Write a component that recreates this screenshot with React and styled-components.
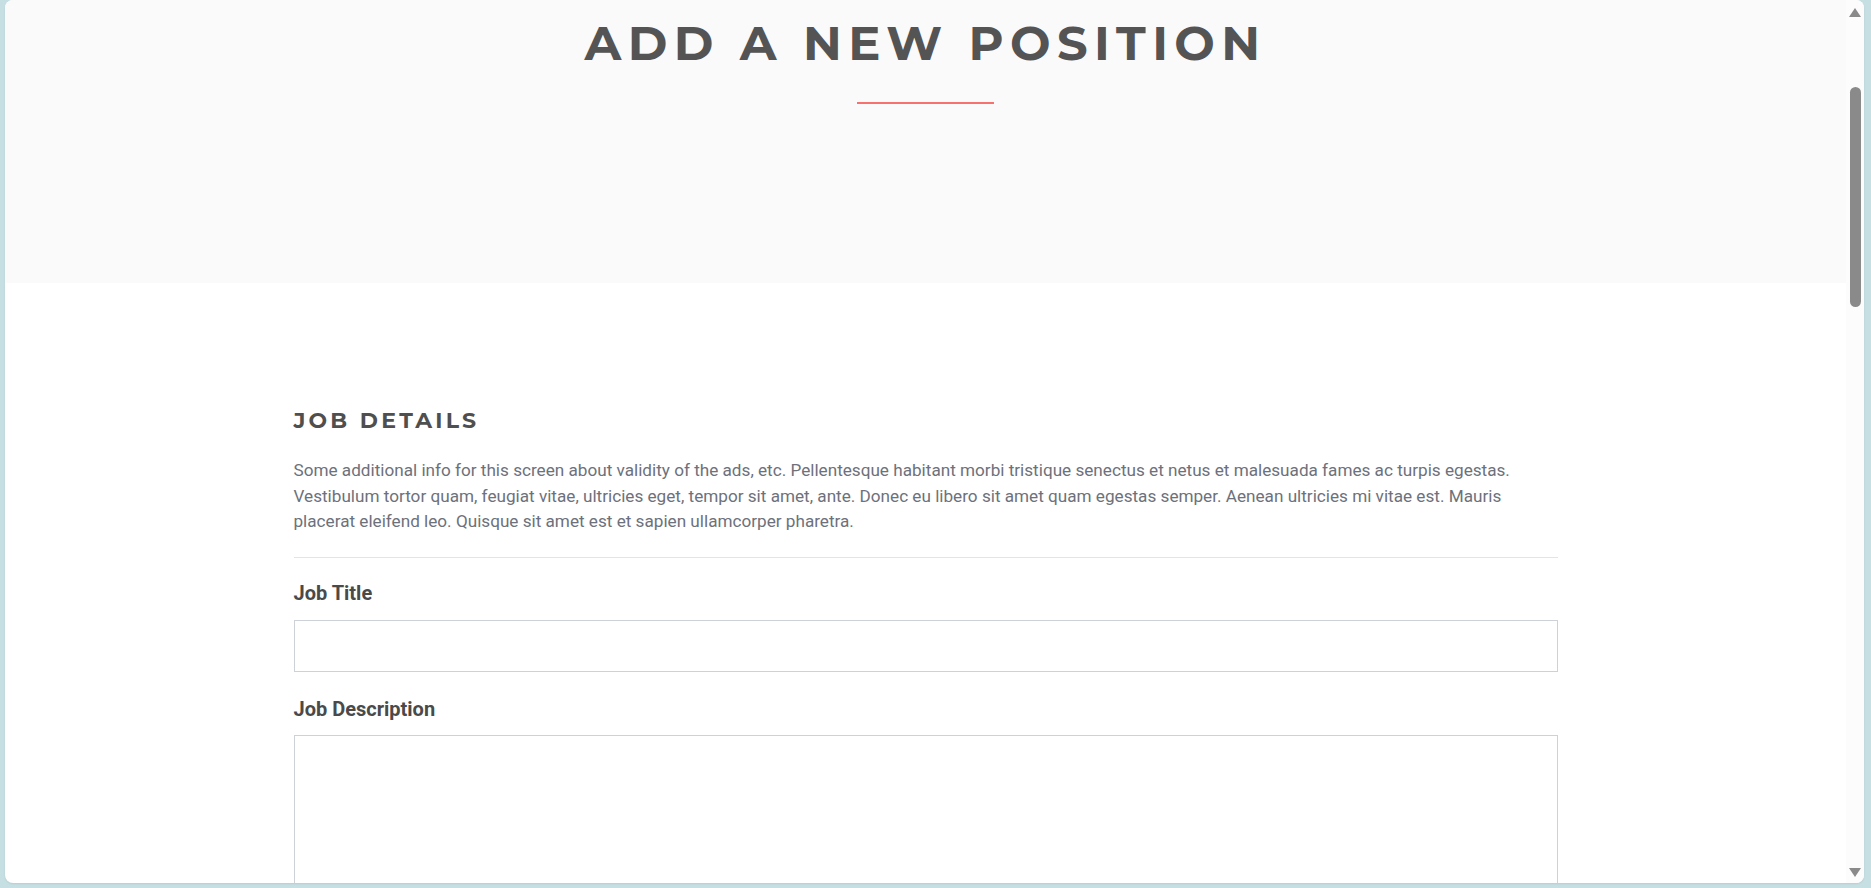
import React from 'react';
import styled, { createGlobalStyle } from 'styled-components';

const GlobalStyle = createGlobalStyle`
  html, body {
    margin: 0;
    padding: 0;
    height: 100%;
    background-color: #c6dfe3;
  }
  #root {
    height: 100%;
  }
  * {
    box-sizing: border-box;
  }
`;

const Frame = styled.div`
  height: 100vh;
  padding: 0 7px 5px 5px;
`;

const Window = styled.div`
  display: flex;
  height: 100%;
  background-color: #ffffff;
  border-radius: 8px;
  overflow: hidden;
  box-shadow: 0 1px 2px rgba(0, 0, 0, 0.08);
`;

const Viewport = styled.main`
  flex: 1;
  overflow: hidden;
  font-family: Roboto, "Liberation Sans", sans-serif;
`;

const Scrollbar = styled.div`
  width: 18px;
  display: flex;
  flex-direction: column;
  align-items: center;
  background-color: #fcfcfc;
  padding: 8px 0 6px;
`;

const Arrow = styled.div`
  width: 0;
  height: 0;
  border-left: 6px solid transparent;
  border-right: 6px solid transparent;
  ${({ down }) =>
    down
      ? 'border-top: 9px solid #8a8a8a; margin-top: auto;'
      : 'border-bottom: 9px solid #8a8a8a;'}
`;

const Thumb = styled.div`
  width: 11px;
  height: 220px;
  margin-top: 70px;
  border-radius: 6px;
  background-color: #8a8a8a;
`;

const Hero = styled.header`
  height: 283px;
  background-color: #fafafa;
  display: flex;
  flex-direction: column;
  align-items: center;
  padding-top: 18px;
`;

const HeroTitle = styled.h1`
  margin: 0;
  font-family: Montserrat, "DejaVu Sans", sans-serif;
  font-size: 48px;
  line-height: 50px;
  font-weight: 700;
  letter-spacing: 6.4px;
  color: #545454;
  text-transform: uppercase;
`;

const Accent = styled.span`
  display: block;
  width: 137px;
  height: 2px;
  margin-top: 34px;
  background-color: #f7726e;
`;

const Section = styled.section`
  width: 1264px;
  margin: 0 auto;
  padding-top: 125px;
`;

const SectionTitle = styled.h2`
  margin: 0 0 24px;
  font-family: Montserrat, "DejaVu Sans", sans-serif;
  font-size: 22px;
  line-height: 26px;
  font-weight: 700;
  letter-spacing: 3.2px;
  color: #4f4f4f;
`;

const Intro = styled.p`
  margin: 0;
  padding-bottom: 22px;
  border-bottom: 1px solid #e4e4e4;
  font-size: 17.15px;
  line-height: 25.7px;
  color: #6d717b;
`;

const Field = styled.div`
  display: flex;
  flex-direction: column;
  margin-top: ${({ first }) => (first ? '23px' : '25px')};
`;

const Label = styled.label`
  font-size: 20px;
  line-height: 24px;
  font-weight: 700;
  color: #4a4a4a;
  margin-bottom: ${({ tight }) => (tight ? '14px' : '15px')};
`;

const Input = styled.input`
  height: 52px;
  border: 1px solid #cdd1d8;
  border-radius: 0;
  padding: 0 14px;
  font: inherit;
`;

const TextArea = styled.textarea`
  height: 220px;
  border: 1px solid #cdd1d8;
  border-radius: 0;
  padding: 14px;
  font: inherit;
  resize: none;
`;

export default function App() {
  return (
    <>
      <GlobalStyle />
      <Frame>
        <Window>
          <Viewport>
            <Hero>
              <HeroTitle>Add a new position</HeroTitle>
              <Accent />
            </Hero>
            <Section>
              <SectionTitle>JOB DETAILS</SectionTitle>
              <Intro>
                Some additional info for this screen about validity of the ads, etc. Pellentesque habitant morbi tristique senectus et netus et malesuada fames ac turpis egestas. Vestibulum tortor quam, feugiat vitae, ultricies eget, tempor sit amet, ante. Donec eu libero sit amet quam egestas semper. Aenean ultricies mi vitae est. Mauris placerat eleifend leo. Quisque sit amet est et sapien ullamcorper pharetra.
              </Intro>
              <Field first>
                <Label htmlFor="job-title">Job Title</Label>
                <Input id="job-title" type="text" />
              </Field>
              <Field>
                <Label htmlFor="job-description" tight>Job Description</Label>
                <TextArea id="job-description" />
              </Field>
            </Section>
          </Viewport>
          <Scrollbar>
            <Arrow />
            <Thumb />
            <Arrow down />
          </Scrollbar>
        </Window>
      </Frame>
    </>
  );
}
